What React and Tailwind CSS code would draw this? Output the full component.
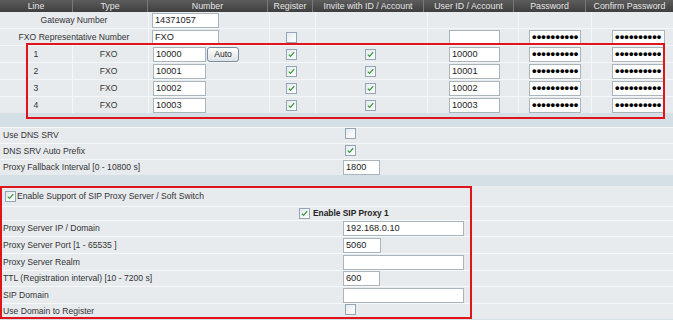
const cols = 'grid grid-cols-[72px_75px_120px_45px_111px_90px_72px_88px]';

function Check({ on }) {
  return (
    <span className="inline-flex w-[11px] h-[11px] items-center justify-center border border-[#93a6b7] bg-gradient-to-br from-[#e6eaee] to-white">
      {on && (
        <svg width="9" height="9" viewBox="0 0 9 9">
          <path d="M1.8 4.6 L3.6 6.4 L7.2 2.2" fill="none" stroke="#3a9a3a" strokeWidth="1.3" />
        </svg>
      )}
    </span>
  );
}

function Field({ value = '', w }) {
  return (
    <div className={`${w} h-[15px] border border-[#a9b4bd] bg-white pl-[2px] text-[9.2px] leading-[13px] text-[#222]`}>
      {value}
    </div>
  );
}

function Secret({ w }) {
  return (
    <div className={`${w} h-[15px] border border-[#a9b4bd] bg-white pl-[2px] overflow-hidden text-[13px] font-bold leading-[12px] tracking-[0.1px] text-black`}>
      ••••••••••
    </div>
  );
}

function Cell({ children, className = '' }) {
  return <div className={`bg-[#e8ebee] flex items-center ${className}`}>{children}</div>;
}

const heads = ['Line', 'Type', 'Number', 'Register', 'Invite with ID / Account', 'User ID / Account', 'Password', 'Confirm Password'];

const lines = [
  ['1', '10000', true],
  ['2', '10001', false],
  ['3', '10002', false],
  ['4', '10003', false],
];

function Row({ label, children, h = 'h-[16px]' }) {
  return (
    <div className={`flex ${h} bg-[#e8ebee] border-t border-[#f6f8fa]`}>
      <div className="w-[343px] pl-[3px] flex items-center">{label}</div>
      <div className="flex items-center">{children}</div>
    </div>
  );
}

export default function App() {
  return (
    <div
      className="w-[673px] h-[320px] overflow-hidden bg-[#d4dfe6] text-[8.6px] text-[#333]"
      style={{ fontFamily: '"Liberation Sans", Arial, sans-serif' }}
    >
      {/* Line table */}
      <div className="relative">
        <div className={`${cols} h-[12px] bg-gradient-to-b from-[#5d5d5d] to-[#3f3f3f] text-[#e6e6e6] text-[8.8px]`}>
          {heads.map((h, i) => (
            <div key={h} className={`flex items-center justify-center ${i > 0 ? 'border-l border-[#7a7a7a]' : ''}`}>
              {h}
            </div>
          ))}
        </div>
        <div className={`${cols} gap-px bg-[#f4f6f8]`}>
          <Cell className="col-span-2 justify-center h-[16px]">Gateway Number</Cell>
          <Cell className="pl-[3px]"><Field value="14371057" w="w-[67px]" /></Cell>
          <Cell />
          <Cell />
          <Cell />
          <Cell />
          <Cell />

          <Cell className="col-span-2 justify-center h-[16px]">FXO Representative Number</Cell>
          <Cell className="pl-[3px]"><Field value="FXO" w="w-[67px]" /></Cell>
          <Cell className="justify-center pr-[2px]"><Check /></Cell>
          <Cell />
          <Cell className="pl-[21px]"><Field w="w-[51px]" /></Cell>
          <Cell className="pl-[10px]"><Secret w="w-[52px]" /></Cell>
          <Cell className="pl-[20px]"><Secret w="w-[53px]" /></Cell>

          {lines.map(([n, num, auto]) => [
            <Cell key={n + 'a'} className="justify-center h-[16px]">{n}</Cell>,
            <Cell key={n + 'b'} className="justify-center pr-[4px]">FXO</Cell>,
            <Cell key={n + 'c'} className="pl-[4px] gap-[1px]">
              <Field value={num} w="w-[53px]" />
              {auto && (
                <div className="w-[32px] h-[15px] rounded-[3px] border border-[#7b8d9c] bg-gradient-to-b from-white to-[#dde3e8] flex items-center justify-center text-[8.6px] text-[#222]">
                  Auto
                </div>
              )}
            </Cell>,
            <Cell key={n + 'd'} className="justify-center pr-[2px]"><Check on /></Cell>,
            <Cell key={n + 'e'} className="justify-center pr-[2px]"><Check on /></Cell>,
            <Cell key={n + 'f'} className="pl-[21px]"><Field value={num} w="w-[51px]" /></Cell>,
            <Cell key={n + 'g'} className="pl-[10px]"><Secret w="w-[52px]" /></Cell>,
            <Cell key={n + 'h'} className="pl-[20px]"><Secret w="w-[53px]" /></Cell>,
          ])}
        </div>
        <div className="absolute left-[26px] top-[43px] w-[639px] h-[76px] border-2 border-[#e0141b] pointer-events-none" />
      </div>

      {/* DNS */}
      <div className="mt-[14px]">
        <Row label="Use DNS SRV"><div className="pl-[2px]"><Check /></div></Row>
        <Row label="DNS SRV Auto Prefix"><div className="pl-[2px]"><Check on /></div></Row>
        <Row label="Proxy Fallback Interval [0 - 10800 s]"><Field value="1800" w="w-[37px]" /></Row>
      </div>

      {/* SIP proxy */}
      <div className="relative mt-[11px]">
        <div className="flex items-center h-[20px] bg-[#e8ebee] pl-[5px] gap-[1px]">
          <Check on />
          <span>Enable Support of SIP Proxy Server / Soft Switch</span>
        </div>
        <div className="flex items-center h-[14px] bg-[#e8ebee] border-t border-[#f6f8fa] pl-[299px] gap-[3px]">
          <Check on />
          <span className="font-bold text-[8.4px] text-[#222]">Enable SIP Proxy 1</span>
        </div>
        <Row label="Proxy Server IP / Domain" h="h-[16px]"><Field value="192.168.0.10" w="w-[121px]" /></Row>
        <Row label="Proxy Server Port [1 - 65535 ]" h="h-[17px]"><Field value="5060" w="w-[38px]" /></Row>
        <Row label="Proxy Server Realm" h="h-[17px]"><Field w="w-[121px]" /></Row>
        <Row label="TTL (Registration interval) [10 - 7200 s]" h="h-[16px]"><Field value="600" w="w-[37px]" /></Row>
        <Row label="SIP Domain" h="h-[17px]"><Field w="w-[121px]" /></Row>
        <Row label="Use Domain to Register" h="h-[16px]"><div className="pl-[2px]"><Check /></div></Row>
        <div className="absolute left-0 top-0 w-[472px] h-[133px] border-2 border-[#e0141b] pointer-events-none" />
      </div>
    </div>
  );
}
